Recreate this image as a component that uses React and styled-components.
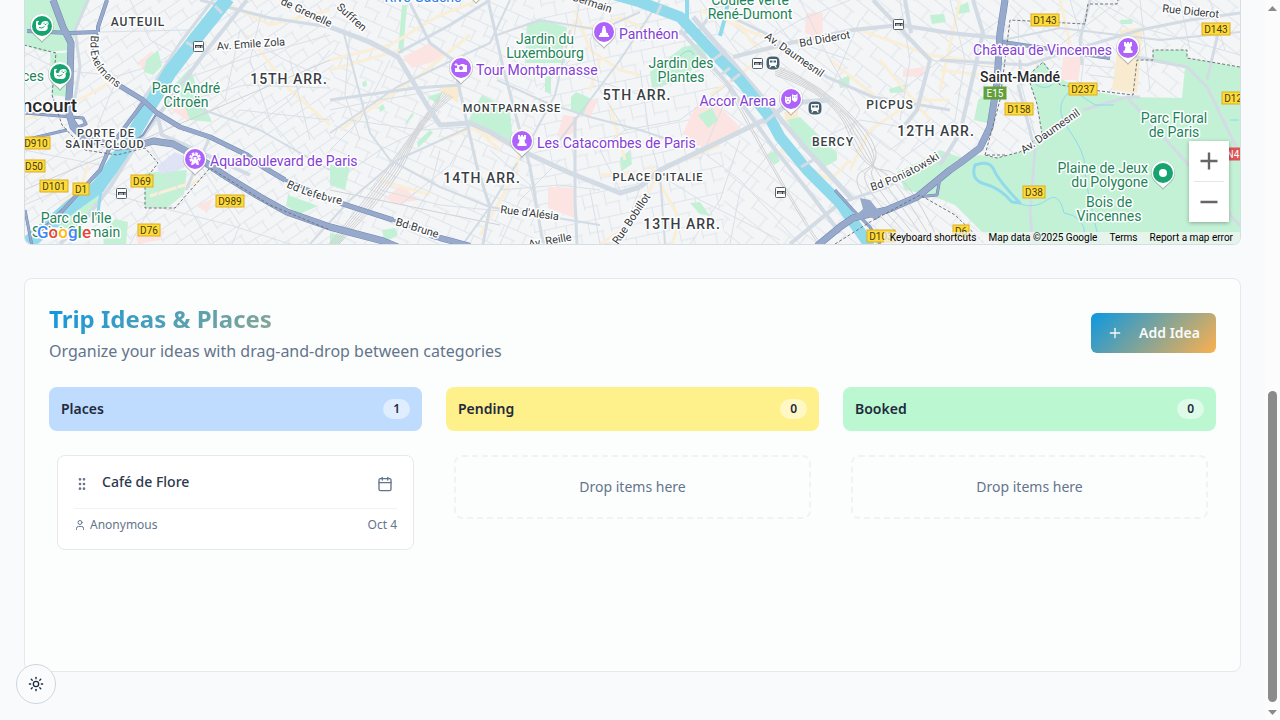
import React from "react";
import styled, { createGlobalStyle } from "styled-components";
import { Calendar, GripVertical, Plus, Sun, User } from "lucide-react";

const GlobalStyle = createGlobalStyle`
  *, *::before, *::after { box-sizing: border-box; }
  body {
    margin: 0;
    background: #f8fafc;
    color: #1f2a3d;
    font-family: "Noto Sans", sans-serif;
  }
  button { font: inherit; color: inherit; border: 0; padding: 0; background: none; cursor: pointer; }
  h2, h3, h4, p { margin: 0; }
`;

const Page = styled.div`
  display: flex;
  min-height: 100vh;
`;

const Main = styled.main`
  flex: 1;
  min-width: 0;
  display: flex;
  flex-direction: column;
  gap: 33px;
  padding: 0 24px 48px;
`;

const MapFrame = styled.section`
  position: relative;
  height: 245px;
  overflow: hidden;
  border: 1px solid #d5dee2;
  border-top: 0;
  border-radius: 0 0 8px 8px;
  font-family: Roboto, sans-serif;
`;

const MapDrawing = styled.svg`
  display: block;
  width: 100%;
  height: 100%;
`;

const ZoomControl = styled.div`
  position: absolute;
  right: 11px;
  bottom: 22px;
  width: 40px;
  display: flex;
  flex-direction: column;
  align-items: center;
  background: #fff;
  box-shadow: 0 1px 4px rgba(0, 0, 0, 0.3);
`;

const ZoomButton = styled.button`
  display: grid;
  place-items: center;
  width: 40px;
  height: 40px;
`;

const ZoomDivider = styled.span`
  width: 30px;
  height: 1px;
  background: #e6e6e6;
`;

const Attribution = styled.div`
  position: absolute;
  right: 0;
  bottom: 0;
  display: flex;
  padding-right: 1px;
  font-size: 10px;
  line-height: 12px;
  color: #000;
  white-space: nowrap;
  background: rgba(245, 245, 245, 0.72);
  > * {
    padding: 0 6px;
    color: inherit;
    text-decoration: none;
  }
`;

const Board = styled.section`
  padding: 24px;
  border: 1px solid #e5e9ed;
  border-radius: 8px;
  background: #fcfefe;
`;

const BoardHeader = styled.header`
  display: flex;
  align-items: center;
  justify-content: space-between;
  margin-bottom: 24px;
`;

const Heading = styled.div`
  display: flex;
  flex-direction: column;
  gap: 4px;
`;

const Title = styled.h2`
  font-size: 24px;
  line-height: 32px;
  font-weight: 700;
  color: transparent;
  background: linear-gradient(135deg, #0c98e0, #fbb04e);
  background-clip: text;
  -webkit-background-clip: text;
`;

const Subtitle = styled.p`
  font-size: 16px;
  line-height: 24px;
  color: #64748b;
`;

const AddButton = styled.button`
  && {
    display: flex;
    align-items: center;
    gap: 16px;
    height: 40px;
    padding: 0 16px;
    border-radius: 6px;
    font-size: 14px;
    line-height: 20px;
    font-weight: 600;
    color: #f8fafc;
    background: linear-gradient(135deg, #0c98e0, #fbb04e);
  }
`;

const Columns = styled.div`
  display: grid;
  grid-template-columns: repeat(3, 1fr);
  gap: 24px;
`;

const Column = styled.section`
  display: flex;
  flex-direction: column;
  gap: 16px;
`;

const ColumnHeader = styled.header`
  display: flex;
  align-items: center;
  justify-content: space-between;
  padding: 12px;
  border-radius: 8px;
  background: ${(p) => p.$tone};
`;

const ColumnTitle = styled.h3`
  font-size: 14px;
  line-height: 20px;
  font-weight: 600;
`;

const Count = styled.span`
  padding: 0 10px;
  border-radius: 10px;
  font-size: 12px;
  line-height: 20px;
  font-weight: 600;
  background: rgba(255, 255, 255, 0.5);
`;

const ColumnBody = styled.div`
  min-height: 200px;
  padding: 8px;
`;

const DropZone = styled.div`
  padding: 20px;
  border: 2px dashed #f0f2f3;
  border-radius: 8px;
  font-size: 14px;
  line-height: 20px;
  text-align: center;
  color: #64748b;
`;

const IdeaCard = styled.article`
  padding: 16px;
  border: 1px solid #e5e9ed;
  border-radius: 8px;
  background: #fff;
`;

const IdeaTop = styled.div`
  display: flex;
  gap: 12px;
  padding-bottom: 12px;
  border-bottom: 1px solid #f0f2f4;
`;

const IdeaTitle = styled.h4`
  flex: 1;
  font-size: 14px;
  line-height: 20px;
  font-weight: 500;
  color: #2c394d;
`;

const IconButton = styled.button`
  display: grid;
  place-items: center;
  width: ${(p) => p.$width};
  height: 24px;
  && { color: #64748b; }
`;

const IdeaMeta = styled.div`
  display: flex;
  justify-content: space-between;
  padding-top: 8px;
  font-size: 12px;
  line-height: 16px;
  color: #64748b;
`;

const Author = styled.span`
  display: flex;
  align-items: center;
  gap: 4px;
`;

const ThemeToggle = styled.button`
  && {
    position: fixed;
    left: 16px;
    bottom: 16px;
    display: grid;
    place-items: center;
    width: 40px;
    height: 40px;
    border: 1px solid #cbd8dc;
    border-radius: 50%;
    background: #f9fbfd;
    color: #1f2a3d;
  }
`;

const ScrollRail = styled.div`
  position: sticky;
  top: 0;
  width: 15px;
  height: 100vh;
  display: flex;
  flex-direction: column;
  align-items: center;
  background: #fcfcfc;
`;

const RailArrow = styled.svg`
  flex: none;
  width: 9px;
  height: 18px;
`;

const RailTrack = styled.div`
  flex: 1;
  display: flex;
  flex-direction: column;
  justify-content: flex-end;
`;

const RailThumb = styled.div`
  width: 9px;
  height: 45.5%;
  border-radius: 5px;
  background: #8b8b8b;
`;

/* ---------- map ---------- */

const MapText = styled.text`
  font-family: Roboto, sans-serif;
  font-size: ${(p) => p.$size || 14}px;
  font-weight: ${(p) => p.$weight || 400};
  letter-spacing: ${(p) => (p.$tracked ? "1px" : "normal")};
  fill: ${(p) => p.$color};
  stroke: ${(p) => p.$halo || "#fff"};
  stroke-width: ${(p) => (p.$halo === "none" ? 0 : 3)}px;
  stroke-linejoin: round;
  paint-order: stroke;
`;

const PURPLE = "#8440d6";
const GREEN = "#1c8458";
const DARK = "#3a3f45";
const STREET = "#33383c";

const parks = [
  "24,0 90,0 76,30 71,50 44,52 24,45",
  "50,53 68,53 68,97 52,95",
  "146,60 158,50 162,66 153,75 144,72",
  "176,83 190,68 198,90 212,122 190,120",
  "145,173 187,170 184,194 167,208 145,208",
  "102,232 115,219 128,222 126,244 104,244",
  "56,212 100,190 94,214 62,238 40,236",
  "288,195 318,206 300,214 286,206",
  "330,165 350,167 345,190 330,185",
  "398,52 402,5 407,5 403,53",
  "527,23 543,20 567,27 565,63 525,63",
  "482,95 510,110 513,143 467,123",
  "571,97 576,92 590,98 583,116 571,110",
  "650,72 683,47 702,43 707,57 680,80 652,88",
  "787,120 800,117 837,153 837,160 823,168 800,147",
  "698,115 712,108 718,120 708,128",
  "330,233 345,236 340,244 330,244",
  "382,230 395,228 398,235 385,242",
  "545,78 551,75 551,94 545,92",
  "838,80 850,75 849,87 840,88",
  "889,89 906,84 907,92 890,93",
  "690,203 700,202 710,216 700,214",
  "620,158 630,150 632,164 622,171",
  "978,100 994,88 991,124 974,120",
  "955,8 968,2 970,12 958,14",
  "930,15 944,14 946,22 932,24",
  "1120,20 1133,19 1132,24 1121,24",
  "407,123 414,115 412,113 404,125",
  "362,83 366,80 367,86 363,87",
  "379,107 383,104 385,109 380,112",
  "427,97 442,92 438,104",
  "417,142 430,130 433,133 418,148",
  "767,155 775,150 780,161 774,165",
  "897,172 917,163 940,150 962,158 980,155 997,158 1020,152 1042,134 1037,104 1030,83 1031,73 1043,62 1057,77 1083,90 1127,97 1182,98 1185,68 1153,62 1153,50 1187,50 1187,58 1240,67 1240,244 1000,244 983,233 955,205 930,195 905,190",
];
const pinks = [
  "138,62 152,51 158,62 145,72",
  "167,107 180,103 194,117 188,121",
  "403,57 430,43 445,55 430,63 412,68",
  "563,115 578,117 575,133 557,137",
  "548,187 575,188 575,218 548,208",
  "580,113 588,100 598,100 590,117",
  "385,198 402,185 418,200 395,204",
  "695,107 713,100 740,127 738,135 703,148 683,133",
  "806,13 823,13 822,40 805,33",
  "1063,57 1082,57 1078,80 1061,80",
  "903,70 925,67 923,76 903,77",
  "196,206 214,198 207,212",
  "135,233 165,231 160,240 138,244",
];
const blocks = [
  "1120,30 1143,27 1137,93 1112,90",
  "438,90 458,83 458,103",
  "784,112 798,110 798,120 786,122",
];
const sand = [
  "24,120 70,105 118,78", "248,35 290,90 330,125", "220,0 270,25 330,10", "88,165 80,190 60,205",
  "330,60 390,45 440,15 480,0", "330,70 400,50", "340,130 420,75 470,35", "475,130 520,150 515,175 480,235",
  "440,140 475,128 500,150", "575,10 590,50 620,70 640,75", "580,30 620,18 650,30", "600,60 590,90",
  "650,165 680,220 672,244", "655,180 630,225 600,244", "600,175 655,172 720,145", "700,10 770,40 800,60",
  "735,20 760,52 800,40", "830,60 880,100 950,100", "880,60 930,120", "860,30 930,55 1000,65",
  "900,110 870,130 850,170", "780,150 830,180 850,160", "940,70 1000,77", "940,90 960,0", "1060,0 1072,52",
  "150,196 200,180", "560,60 575,20", "610,105 625,160", "380,180 430,195", "710,95 760,60",
];
const minorStreets = [
  "24,52 60,70 118,76 170,60", "100,32 187,30 215,60", "118,76 96,130", "130,0 150,40 187,60", "215,0 250,40 285,60 330,80",
  "187,78 240,60 330,35", "200,97 245,85 330,88", "240,30 225,100 190,125", "262,10 250,60 270,120 300,155",
  "250,130 290,100 330,50", "210,137 240,110 330,120", "150,145 185,200 210,244", "100,190 150,205 230,225 290,244",
  "180,165 160,190 130,244", "200,165 240,225 232,244", "24,150 100,165", "24,205 60,190", "290,60 310,140",
  "330,110 380,100 440,90", "330,185 380,150 440,120", "350,30 345,95 360,140", "390,60 360,120 330,150",
  "430,110 400,150 370,190", "350,120 420,130 470,127", "380,190 440,205 540,215", "400,205 450,165 470,130",
  "440,150 430,190 400,235", "500,190 560,185 600,190", "490,150 530,185 545,244", "560,160 520,200 500,244",
  "590,190 600,244", "610,0 590,40 600,90 625,130", "540,90 570,60 580,0", "580,75 640,95 700,70",
  "625,130 600,150 620,190", "625,130 680,120 727,85", "640,70 650,140 660,175", "690,50 730,90 700,160",
  "660,175 700,200 780,240", "700,150 740,180 800,244", "740,140 720,200 690,244", "780,140 740,190 730,244",
  "640,187 620,244", "700,0 740,55 800,20 850,0", "760,0 790,40 850,60", "800,0 830,60 860,110 850,130",
  "860,20 830,90", "890,100 940,60 1000,20", "840,110 890,150 930,120", "820,140 860,120 920,130",
  "900,0 910,60 900,120", "930,60 1000,68", "950,0 965,60 955,120 900,160", "1010,5 1060,60", "1018,20 1020,80 1035,135",
  "1010,90 1050,160", "1010,110 1035,105", "1070,0 1085,50 1080,90", "1095,0 1150,30 1240,55", "1120,0 1060,45",
  "1140,0 1150,90", "1180,0 1190,50", "1210,0 1225,50", "1085,65 1115,68", "1090,75 1115,78",
];
const majorStreets = [
  ["247,0 207,50 177,90 157,117 133,150 110,187 87,217 60,244", 4], ["213,0 180,43 158,77 138,107", 3],
  ["88,0 75,30 80,67 73,110", 3], ["330,27 370,42 398,57 430,110 440,125 470,123 490,132 520,150 570,173 620,193 640,187", 5],
  ["200,0 270,18 330,27", 3], ["398,53 450,25 490,0", 3], ["410,3 430,43 453,60 467,123 477,167 490,207 483,244", 3],
  ["488,0 503,67 517,120 530,167 543,244", 3], ["497,80 547,103 590,117 640,130 700,150", 2], ["497,35 540,20 600,30 640,12", 2],
  ["575,117 575,200 577,244", 3], ["517,163 490,207 463,244", 2], ["470,127 397,160 350,200 310,244", 2],
  ["343,30 370,133 390,160 440,187 490,207 600,225", 2], ["330,133 397,87 453,60 490,43 510,0", 2], ["330,100 415,88 460,85", 3],
  ["210,137 197,165 186,190", 3], ["158,117 162,135 185,145 250,175", 4], ["190,105 260,130 330,170", 2],
  ["640,187 660,170 723,140 770,117 790,103 830,100", 5], ["680,30 727,83 773,147 813,197 840,233", 4],
  ["693,17 733,63 773,110 807,150 853,200", 5], ["733,57 790,43 853,30 900,25 950,33 1000,38", 4],
  ["723,13 773,37 827,77 873,97 950,110", 3], ["873,0 930,60 917,110 905,125", 4], ["905,0 911,33", 4],
  ["840,203 887,187 950,153", 3], ["840,203 790,244", 4], ["640,40 700,30 720,0", 3], ["660,175 665,244", 2],
  ["940,60 1027,65 1073,50 1140,30 1190,20 1240,13", 3], ["973,0 983,33 960,133 940,165", 4],
  ["1090,0 1080,40 1082,65", 3], ["1003,40 1060,28 1160,40 1240,32", 2], ["1020,60 1020,85", 3],
  ["1018,85 1035,150 1030,213 1033,244", 3], ["1083,110 1127,97 1140,97", 3], ["1127,97 1187,163 1240,226", 3],
  ["1127,55 1187,67 1207,87 1240,155", 3], ["1220,25 1207,80", 3], ["560,140 620,60 660,0", 2], ["520,160 555,95 570,30", 2],
];
const highways = [
  ["53,0 63,27 71,43 70,83 68,110 73,127 84,138 117,147 140,145 153,141 173,144 197,157 227,177 260,197 287,212 330,227 383,241 400,248", 7],
  ["27,31 70,33 98,32", 4], ["107,0 98,27 98,32", 4], ["98,34 93,45 93,60 110,80 143,100", 2], ["120,86 143,100 157,113 180,127 210,137 247,155 263,167 285,180", 5],
  ["285,180 293,183 340,203", 3], ["340,203 393,220", 5], ["393,220 437,237", 3], ["430,235 440,238 470,246", 6],
  ["143,103 110,147 100,170 63,210 45,228", 4], ["24,140 67,130", 3], ["24,113 83,118 86,124 78,127 68,112", 3], ["25,210 32,246", 3], ["157,113 143,135 127,147", 2],
  ["817,246 840,227 853,218 887,210 917,197 950,170 960,163 980,148 990,127 997,83 1000,33 1005,0", 7],
  ["1003,42 1057,50 1110,58", 4], ["835,190 853,210 870,227 880,244", 3], ["917,197 937,195 940,178", 3],
];
const boundaries = [
  "24,45 56,53 52,95 62,125 85,150 117,155 145,148 158,163 145,180 145,208 175,208 210,168 270,205 330,230",
  "1005,155 985,155 1000,100 1010,20 1085,24 1088,4 1117,4 1118,0",
  "1042,134 1037,104 1030,83 1031,73 1043,62 1060,85 1100,91 1133,95 1137,60 1153,60 1153,50 1187,50 1187,58 1240,67",
  "985,155 997,158 1020,152 1042,134", "835,244 870,222 920,195 955,215 985,244",
];
const shields = [
  [36, 143, "D910"], [34, 166, "D50"], [54, 186, "D101"], [81, 189, "D1"], [142, 181, "D69"],
  [230, 201, "D989"], [149, 230, "D76"], [1045, 20, "D143"], [1216, 29, "D143"], [1083, 89, "D237"],
  [1019, 109, "D158"], [1236, 98, "D120"], [1034, 192, "D38"], [961, 231, "D6"], [881, 236, "D103"],
];
const tracks = [-5, -3, -1, 1, 3, 5];

function Shield({ x, y, label, fill = "#fddb3a", edge = "#dfad20", ink = "#4b3b12" }) {
  const w = label.length * 6 + 4;
  return (
    <g>
      <rect x={x - w / 2} y={y - 6} width={w} height="12" fill={fill} stroke={edge} />
      <MapText $size={10} $halo="none" $color={ink} x={x} y={y + 4} textAnchor="middle">{label}</MapText>
    </g>
  );
}

function Pin({ x, y, color = "#ae62fb", children }) {
  return (
    <g transform={`translate(${x} ${y})`}>
      <path d="M0 17C-3 12-12 9-12 0A12 12 0 0 1 12 0C12 9 3 12 0 17Z" fill="#8a8f94" opacity=".6" />
      <path d="M0 15.500C-3 11-11.500 8-11.500-.5A11.500 11.500 0 0 1 11.500-.5C11.500 8 3 11 0 15.500Z" fill="#fff" />
      <circle r="10" fill={color} />
      <g fill="#fff">{children}</g>
    </g>
  );
}

const Rook = () => (
  <path d="M-4-6h2v1.500h1V-6h2v1.500h1V-6h2v4l-1.500 1 .8 3.500h1.200V5h-9V2.500h1.200l.8-3.500-1.500-1Z" />
);

function Otter() {
  return (
    <g>
      <path d="M-6-4.500Q-3.500-6-3-4.500Q-5-3-4-1.500Q-2.500-.5-1-1.500Q-.5-4 1-4.500Q3.500-5.500 6-4.500Q7.500-2 5.500-.5Q6.500 4 3 5H-2Q-6 4.500-6 .5Z" />
      <path d="M1.500-2.800H2.500M4.500-2.800H5.500M2.800-1.500H4.200M-3 1.500Q0 3 2.500.5" fill="none" stroke="#16a36f" />
    </g>
  );
}

function RailStop({ x, y }) {
  return (
    <g transform={`translate(${x} ${y})`}>
      <rect x="-7" y="-7" width="14" height="14" rx="5" fill="#46606f" stroke="#fff" />
      <path d="M-3-4h6a1 1 0 0 1 1 1v4a1.500 1.500 0 0 1-1.500 1.500L4 4.500H2.500L1.500 3h-3l-1 1.500H-4l1.500-2A1.500 1.500 0 0 1-4 1v-4a1 1 0 0 1 1-1Z" fill="#fff" />
      <path d="M-3-2.500h2.500v2H-3zM.5-2.500H3v2H.5z" fill="#46606f" />
    </g>
  );
}

function RerStop({ x, y }) {
  return (
    <g transform={`translate(${x} ${y})`}>
      <rect x="-4.500" y="-4.500" width="10" height="10" rx="1" fill="#fff" stroke="#59636b" />
      <path d="M-2.500-1V2M-1-1V2M1-1V2M2.500-1V2M4-1V2M-3-.5H4.500" fill="none" stroke="#30383e" strokeWidth=".9" />
    </g>
  );
}

const Lines = ({ items, color, width, dash }) => (
  <g fill="none" stroke={color} strokeLinejoin="round" strokeDasharray={dash}>
    {items.map((it) => {
      const [points, w] = Array.isArray(it) ? it : [it, 0];
      return <polyline key={points} points={points} strokeWidth={w + width} />;
    })}
  </g>
);

const Areas = ({ items, color }) => (
  <g fill={color}>{items.map((p) => <polygon key={p} points={p} />)}</g>
);

function StreetPattern({ id, w, h, angle }) {
  return (
    <pattern id={id} width={w} height={h} patternUnits="userSpaceOnUse" patternTransform={`rotate(${angle})`}>
      <path d={`M0 .5H${w}M.5 0V${h * 0.6}M${w * 0.6} ${h * 0.5}V${h}M0 ${h * 0.5}H${w * 0.7}`} stroke="#e0e5eb" fill="none" />
    </pattern>
  );
}

function ParisMap() {
  return (
    <MapDrawing viewBox="25 0 1215 244" preserveAspectRatio="xMidYMax slice" role="img" aria-label="Map of southern Paris">
      <defs>
        <StreetPattern id="grid-west" w={26} h={20} angle={-34} />
        <StreetPattern id="grid-south" w={24} h={22} angle={24} />
        <StreetPattern id="grid-centre" w={22} h={26} angle={-12} />
        <StreetPattern id="grid-east" w={30} h={24} angle={38} />
        <path id="exelmans" d="M91 35C88 62 96 74 122 91" />
        <path id="lefebvre" d="M286 187Q312 199 344 205" />
        <path id="poniatowski" d="M872 191Q912 178 946 154" />
      </defs>
      <rect x="-400" width="2200" height="244" fill="#f4f5f6" />
      <rect x="24" width="310" height="244" fill="url(#grid-west)" />
      <rect x="334" width="200" height="244" fill="url(#grid-south)" />
      <rect x="534" width="190" height="244" fill="url(#grid-centre)" />
      <rect x="724" width="516" height="244" fill="url(#grid-east)" />
      <Areas items={pinks} color="#fce4e2" />
      <Areas items={blocks} color="#f9ebd0" />
      <Areas items={parks} color="#c3f1d5" />
      <polygon points="157,166 175,152 187,158 184,168 160,174" fill="#dfe3f5" />
      <Lines items={sand} color="#f9eed8" width={3} />
      <Lines items={minorStreets} color="#d9e0e7" width={1} />
      <g fill="none" stroke="#d0d2d5">
        {tracks.map((t) => (
          <g key={t}>
            <path d={`M${448 + t} ${94 + t / 2}Q420 122 ${404 + t} 153T${334 + t} 244`} />
            <path d={`M775 ${70 + t}Q${830 + t} ${90 + t} ${853 - t} ${127 + t}T${874 + t * 2} 170T${925 + t * 3} 244`} />
          </g>
        ))}
        <path d="M727 86Q750 130 785 190T820 244M730 86Q752 130 787 190T823 244M24 190L330 60M330 190L500 225" />
      </g>
      <Lines items={majorStreets} color="#d3dce4" width={0} />
      <g fill="none" stroke="#90daec" strokeLinejoin="round">
        <path d="M228-2 196 38 170 72 146 112 130 140 110 170 98 187 70 207 40 233 24 246" strokeWidth="14" />
        <path d="M612-6 640 2 680 17 718 58 740 80 768 115 780 137 807 170 840 203 870 246" strokeWidth="11" />
        <path d="M687-2V20M728-2 726 14 720 36" strokeWidth="4" />
        <path d="M101 190 97 220" strokeWidth="3" />
        <path d="M975 165Q990 160 994 170T1020 203L1012 202Q1000 188 985 184T975 165Z" strokeWidth="3" />
        <path d="M1035 84Q1045 91 1053 84M1068 93Q1053 108 1069 130T1085 168T1100 244M1020 204Q1035 209 1047 200T1064 213Q1085 216 1085 236M1080 95 1095 105H1114M678 58Q690 45 694 55M1230 120H1239" />
      </g>
      <path d="M215 6 222 13M186 42 194 47M710 62 724 52M722 74 730 68M731 81 740 74M764 123 777 112M801 167 813 160M657 14 661 5" stroke="#d3dce4" strokeWidth="3" />
      <Lines items={highways} color="#7087b4" width={0} />
      <Lines items={highways} color="#98aacb" width={-1} />
      <polygon points="860,198 870,200 878,210 884,213 876,220 866,215 854,217 863,209" fill="#98aacb" />
      <Lines items={boundaries} color="#6e757b" width={1} dash="3 2" />

      {shields.map(([x, y, label]) => <Shield key={`${x}-${label}`} x={x} y={y} label={label} />)}
      <Shield x={995} y={93} label="E15" fill="#63a03d" edge="#63a03d" ink="#fff" />
      <Shield x={1233} y={154} label="N4" fill="#dd5558" edge="#dd5558" ink="#fff" />
      {[[198, 46], [121, 193], [757, 63], [898, 24], [780, 192]].map(([x, y]) => <RerStop key={x} x={x} y={y} />)}
      <RailStop x={773} y={63} />
      <RailStop x={815} y={108} />

      <g textAnchor="middle">
        {[
          ["AUTEUIL", 138, 26], ["PORTE DE", 106, 137], ["SAINT-CLOUD", 105, 148], ["MONTPARNASSE", 512, 112],
          ["PLACE D'ITALIE", 658, 181], ["PICPUS", 890, 109], ["BERCY", 833, 146],
        ].map(([t, x, y]) => <MapText key={t} $size={t === "AUTEUIL" || t === "PICPUS" || t === "BERCY" ? 12 : 11} $weight={500} $tracked $color={DARK} x={x} y={y}>{t}</MapText>)}
        {[
          ["15TH ARR.", 289, 84], ["5TH ARR.", 637, 100], ["14TH ARR.", 482, 183], ["13TH ARR.", 682, 229], ["12TH ARR.", 936, 136],
        ].map(([t, x, y]) => <MapText key={t} $size={14} $weight={500} $tracked $color={DARK} x={x} y={y}>{t}</MapText>)}
        {[
          ["Parc André", 186, 93], ["Citroën", 186, 107], ["Jardin du", 545, 44], ["Luxembourg", 545, 58],
          ["Jardin des", 681, 68], ["Plantes", 681, 82], ["Coulée verte", 750, 5], ["René-Dumont", 750, 19],
          ["Parc Floral", 1174, 123], ["de Paris", 1174, 137], ["Bois de", 1109, 207], ["Vincennes", 1109, 221],
          ["Parc de l'île", 76, 223], ["Saint-Germain", 76, 237],
        ].map(([t, x, y]) => <MapText key={t} $color={GREEN} x={x} y={y}>{t}</MapText>)}
        <MapText $color="#2f7de0" x={423} y={2}>Rive Gauche</MapText>
        <MapText $weight={500} $color="#25292c" x={1020} y={82}>Saint-Mandé</MapText>
      </g>
      <g textAnchor="end">
        <MapText $color={GREEN} x={44} y={81}>ces</MapText>
        <MapText $size={19} $weight={500} $color="#25292c" x={77} y={112}>ncourt</MapText>
        <MapText $color={GREEN} x={1148} y={173}>Plaine de Jeux</MapText>
        <MapText $color={GREEN} x={1148} y={187}>du Polygone</MapText>
        <MapText $color={PURPLE} x={1112} y={55}>Château de Vincennes</MapText>
        <MapText $color={PURPLE} x={776} y={106}>Accor Arena</MapText>
      </g>
      <MapText $color={PURPLE} x={210} y={166}>Aquaboulevard de Paris</MapText>
      <MapText $color={PURPLE} x={476} y={75}>Tour Montparnasse</MapText>
      <MapText $color={PURPLE} x={537} y={148}>Les Catacombes de Paris</MapText>
      <MapText $color={PURPLE} x={619} y={39}>Panthéon</MapText>

      {[
        ["Av. Emile Zola", 217, 50, -4], ["de Grenelle", 280, 4, 25], ["Suffren", 336, 8, 42], ["Germain", 571, 0, 18],
        ["Bd Diderot", 800, 47, -10], ["Av. Daumesnil", 764, 38, 35], ["Bd Brune", 395, 225, 17], ["Rue d'Alésia", 500, 213, 7],
        ["Av. Reille", 529, 248, -10], ["Rue Bobillot", 618, 245, -56], ["Rue Diderot", 1162, 12, 6], ["Av. Daumesnil", 1024, 154, -35],
      ].map(([t, x, y, a]) => (
        <MapText key={`${t}${x}`} $size={11} $color={STREET} transform={`translate(${x} ${y}) rotate(${a})`}>{t}</MapText>
      ))}
      <MapText $size={11} $color={STREET}><textPath href="#exelmans">Bd Exelmans</textPath></MapText>
      <MapText $size={11} $color={STREET}><textPath href="#lefebvre">Bd Lefebvre</textPath></MapText>
      <MapText $size={11} $color={STREET}><textPath href="#poniatowski">Bd Poniatowski</textPath></MapText>

      <Pin x={42} y={26} color="#16a36f"><Otter /></Pin>
      <Pin x={60} y={74} color="#16a36f"><Otter /></Pin>
      <Pin x={195} y={159}>
        <g fill="none" stroke="#fff">
          <circle cy="-1" r="4.500" strokeWidth="2.500" strokeDasharray="2.500 1" />
          <circle cy="-1" r="3.200" strokeWidth="1.200" />
        </g>
        <path d="M-1.500-2h3v2.500l1.500 1.500 1 4h-2L0 3.500-2 6h-2l1-4 1.500-1.500Z" />
      </Pin>
      <Pin x={461} y={68}>
        <path d="M-4-3h3l1-1h3l1 1h2v7H-6v-4h2Z" />
        <circle cx="0" cy="0" r="2" fill="#ae62fb" />
        <path d="M-5-5v3M-6.500-3.500h3" stroke="#fff" />
      </Pin>
      <Pin x={604} y={32}><path d="M-1-6h2l.5 2 1 5H4v2h1v2H-5V3h1V1h1.500l1-5Z" /></Pin>
      <Pin x={522} y={141}><Rook /></Pin>
      <Pin x={1128} y={48}><Rook /></Pin>
      <Pin x={791} y={99}>
        <path d="M-6-3 -4.500-2H-1.500L0-3V2Q-.5 5-3 5T-6 2ZM1-5 2.500-4H5L6.500-5.500V0Q6 3 3.500 3L1 1Z" />
        <path d="M-5 0h1.200M-2.200 0H-1M2-2h1M4.500-2h1M-4 2.500q1 1 2 0" stroke="#ae62fb" fill="none" />
      </Pin>
      <Pin x={1163} y={173} color="#16a36f"><circle r="4" /></Pin>
      <Pin x={476} y={-13} color="#2f7de0" />

      <MapText $size={17} $weight={500} $color="#4285f4" x={37} y={238}>
        G<tspan fill="#ea4335">o</tspan><tspan fill="#fbbc04">o</tspan>g<tspan fill="#34a853">l</tspan><tspan fill="#ea4335">e</tspan>
      </MapText>
    </MapDrawing>
  );
}

const columns = [
  { name: "Places", tone: "#bfdbfe", ideas: [{ title: "Café de Flore", author: "Anonymous", date: "Oct 4" }] },
  { name: "Pending", tone: "#fef08a", ideas: [] },
  { name: "Booked", tone: "#bbf7d0", ideas: [] },
];

function Idea({ title, author, date }) {
  return (
    <IdeaCard>
      <IdeaTop>
        <IconButton $width="16px" aria-label={`Move ${title}`}><GripVertical size={16} /></IconButton>
        <IdeaTitle>{title}</IdeaTitle>
        <IconButton $width="24px" aria-label={`Schedule ${title}`}><Calendar size={16} /></IconButton>
      </IdeaTop>
      <IdeaMeta>
        <Author><User size={12} />{author}</Author>
        <span>{date}</span>
      </IdeaMeta>
    </IdeaCard>
  );
}

export default function App() {
  return (
    <Page>
      <GlobalStyle />
      <Main>
        <MapFrame>
          <ParisMap />
          <ZoomControl>
            <ZoomButton aria-label="Zoom in">
              <svg width="18" height="18" viewBox="0 0 18 18"><path d="M9 .5v17M.5 9h17" stroke="#666" strokeWidth="2.400" /></svg>
            </ZoomButton>
            <ZoomDivider />
            <ZoomButton aria-label="Zoom out">
              <svg width="18" height="18" viewBox="0 0 18 18"><path d="M.5 9h17" stroke="#666" strokeWidth="2.400" /></svg>
            </ZoomButton>
          </ZoomControl>
          <Attribution>
            <button>Keyboard shortcuts</button>
            <span>Map data ©2025 Google</span>
            <a href="#terms">Terms</a>
            <a href="#report">Report a map error</a>
          </Attribution>
        </MapFrame>
        <Board>
          <BoardHeader>
            <Heading>
              <Title>Trip Ideas &amp; Places</Title>
              <Subtitle>Organize your ideas with drag-and-drop between categories</Subtitle>
            </Heading>
            <AddButton><Plus size={16} />Add Idea</AddButton>
          </BoardHeader>
          <Columns>
            {columns.map((c) => (
              <Column key={c.name}>
                <ColumnHeader $tone={c.tone}>
                  <ColumnTitle>{c.name}</ColumnTitle>
                  <Count>{c.ideas.length}</Count>
                </ColumnHeader>
                <ColumnBody>
                  {c.ideas.length ? c.ideas.map((i) => <Idea key={i.title} {...i} />) : <DropZone>Drop items here</DropZone>}
                </ColumnBody>
              </Column>
            ))}
          </Columns>
        </Board>
      </Main>
      <ScrollRail aria-hidden="true">
        <RailArrow viewBox="0 0 9 18"><path d="M0 11 4.500 6 9 11Z" fill="#8b8b8b" /></RailArrow>
        <RailTrack><RailThumb /></RailTrack>
        <RailArrow viewBox="0 0 9 18"><path d="M0 8 4.500 13 9 8Z" fill="#8b8b8b" /></RailArrow>
      </ScrollRail>
      <ThemeToggle aria-label="Toggle theme"><Sun size={16} /></ThemeToggle>
    </Page>
  );
}
